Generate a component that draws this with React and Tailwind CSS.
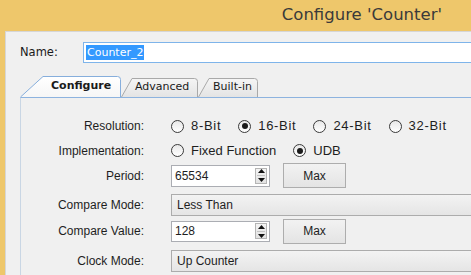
import React from "react";

const label = "font-['Liberation_Sans',Arial,sans-serif] text-[12px] text-[#1e1e1e]";

function Radio({ checked, text, wide }) {
  return (
    <div className="flex items-center mr-[17px]">
      <div className="w-[13px] h-[13px] rounded-full border border-[#3a3a3a] bg-gradient-to-b from-[#e8e8e8] to-white flex items-center justify-center">
        {checked && <div className="w-[6px] h-[6px] rounded-full bg-[#1a1a1a]" />}
      </div>
      <span className={`ml-[7px] font-['Liberation_Sans',Arial,sans-serif] text-[13px] text-[#1e1e1e] ${wide ? "tracking-[0.7px]" : ""}`}>{text}</span>
    </div>
  );
}

function Spin() {
  return (
    <div className="w-[12px] h-[16px] mr-[2px] border border-[#b5b5b5] bg-gradient-to-b from-[#f4f4f4] to-[#e2e2e2] flex flex-col items-center justify-center gap-[2px]">
      <svg width="7" height="4" viewBox="0 0 7 4"><path d="M0 4 L3.5 0 L7 4 Z" fill="#111" /></svg>
      <div className="w-[8px] h-px bg-[#c4c4c4]" />
      <svg width="7" height="4" viewBox="0 0 7 4"><path d="M0 0 L3.5 4 L7 0 Z" fill="#111" /></svg>
    </div>
  );
}

function NumberBox({ value, h }) {
  return (
    <div className={`w-[99px] ${h} border border-[#abadb3] bg-white flex items-center justify-between`}>
      <span className={`pl-[3px] ${label}`}>{value}</span>
      <Spin />
    </div>
  );
}

function MaxButton() {
  return (
    <div className={`ml-[13px] w-[63px] h-[25px] border border-[#adadad] bg-gradient-to-b from-[#f2f2f2] to-[#e4e4e4] flex items-center justify-center ${label}`}>
      Max
    </div>
  );
}

function Dropdown({ text }) {
  return (
    <div className={`flex-1 h-[22px] border border-[#acacac] border-r-0 bg-gradient-to-b from-[#f3f3f3] to-[#e5e5e5] flex items-center pl-[5px] ${label}`}>
      {text}
    </div>
  );
}

function Row({ name, className, children }) {
  return (
    <div className={`flex items-center ${className}`}>
      <div className={`w-[123px] text-right ${label}`}>{name}</div>
      <div className="ml-[27px] flex-1 flex items-center min-w-0">{children}</div>
    </div>
  );
}

function Tab({ w, h, active, pl, children }) {
  return (
    <div className="relative flex items-center" style={{ width: w, height: h }}>
      <svg className="absolute inset-0" width={w} height={h} viewBox={`0 0 ${w} ${h}`}>
        <defs>
          <linearGradient id={active ? "ta" : "ti"} x1="0" y1="0" x2="0" y2="1">
            <stop offset="0" stopColor={active ? "#ffffff" : "#f5f5f5"} />
            <stop offset="1" stopColor={active ? "#f6f6f6" : "#e4e4e4"} />
          </linearGradient>
        </defs>
        {active ? (
          <path d={`M0.5 ${h} L23 0.5 L${w - 3.5} 0.5 Q${w - 0.5} 0.5 ${w - 0.5} 3.5 L${w - 0.5} ${h}`} fill="url(#ta)" stroke="#86aedc" />
        ) : (
          <path d={`M0.5 ${h} L11 0.5 L${w - 3.5} 0.5 Q${w - 0.5} 0.5 ${w - 0.5} 3.5 L${w - 0.5} ${h}`} fill="url(#ti)" stroke="#a9a9a9" />
        )}
      </svg>
      <span
        className={`relative font-['DejaVu_Sans',Verdana,sans-serif] text-[11px] text-[#1a1a1a] ${active ? "font-bold" : ""}`}
        style={{ paddingLeft: pl }}
      >
        {children}
      </span>
    </div>
  );
}

export default function App() {
  return (
    <div className="w-[471px] h-[275px] overflow-hidden bg-[#eec76b] flex flex-col">
      <div className="h-[31px] shrink-0 flex items-center justify-end pr-[29px]">
        <span className="font-['DejaVu_Sans',Verdana,sans-serif] text-[16.5px] text-[#3a3a3a]">Configure 'Counter'</span>
      </div>
      <div className="flex-1 flex pl-[5px] min-h-0">
        <div className="flex-1 min-w-0 bg-[#f0f0f0] border-t border-l border-[#d6d6d6] flex flex-col">
          <div className="mt-[10px] h-[21px] flex items-center pl-[14px]">
            <div className="w-[63px] font-['DejaVu_Sans',Verdana,sans-serif] text-[11.5px] text-[#1a1a1a]">Name:</div>
            <div className="flex-1 h-[21px] border border-r-0 border-[#7eb4ea] bg-white flex items-center pl-[2px]">
              <span className="bg-[#3399ff] text-white px-[1px] leading-[15px] font-['DejaVu_Sans',Verdana,sans-serif] text-[11px]">Counter_2</span>
            </div>
          </div>
          <div className="mt-[13px] ml-[14px] h-[21px] flex items-end">
            <Tab w={101} h={21} active pl={31}>Configure</Tab>
            <Tab w={77} h={19} pl={14}>Advanced</Tab>
            <Tab w={60} h={19} pl={15}>Built-in</Tab>
          </div>
          <div className="flex-1 ml-[14px] border-t border-l border-t-[#8db3df] border-l-[#c9d6e4] pt-[16px] flex flex-col">
            <Row name="Resolution:" className="h-[24px]">
              <Radio wide text="8-Bit" />
              <Radio wide checked text="16-Bit" />
              <Radio wide text="24-Bit" />
              <Radio wide text="32-Bit" />
            </Row>
            <Row name="Implementation:" className="h-[25px]">
              <Radio text="Fixed Function" />
              <Radio checked text="UDB" />
            </Row>
            <Row name="Period:" className="h-[25px]">
              <NumberBox value="65534" h="h-[22px]" />
              <MaxButton />
            </Row>
            <Row name="Compare Mode:" className="mt-[6px] h-[22px]">
              <Dropdown text="Less Than" />
            </Row>
            <Row name="Compare Value:" className="mt-[3px] h-[24px]">
              <NumberBox value="128" h="h-[21px]" />
              <MaxButton />
            </Row>
            <Row name="Clock Mode:" className="mt-[7px] h-[22px]">
              <Dropdown text="Up Counter" />
            </Row>
          </div>
        </div>
      </div>
    </div>
  );
}
